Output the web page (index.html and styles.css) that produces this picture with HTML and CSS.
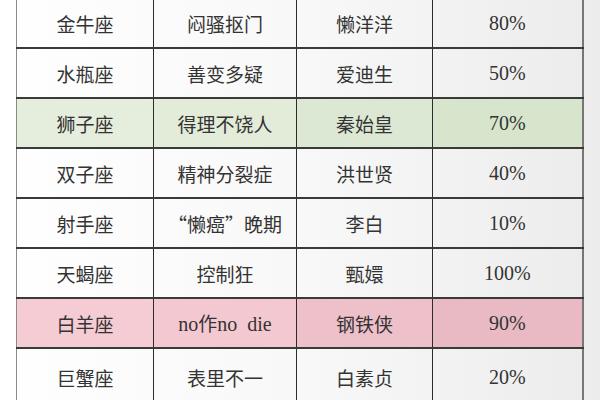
FILE: index.html
```html
<!DOCTYPE html>
<html lang="zh">
<head>
<meta charset="utf-8">
<link rel="stylesheet" href="styles.css">
</head>
<body>
<div class="page">
  <table class="zodiac">
    <colgroup>
      <col class="c1"><col class="c2"><col class="c3"><col class="c4">
    </colgroup>
    <tbody>
      <tr class="first"><td>金牛座</td><td>闷骚抠门</td><td>懒洋洋</td><td class="num">80%</td></tr>
      <tr><td>水瓶座</td><td>善变多疑</td><td>爱迪生</td><td class="num">50%</td></tr>
      <tr class="green"><td>狮子座</td><td>得理不饶人</td><td>秦始皇</td><td class="num">70%</td></tr>
      <tr><td>双子座</td><td>精神分裂症</td><td>洪世贤</td><td class="num">40%</td></tr>
      <tr><td>射手座</td><td>“懒癌”晚期</td><td>李白</td><td class="num">10%</td></tr>
      <tr><td>天蝎座</td><td>控制狂</td><td>甄嬛</td><td class="num">100%</td></tr>
      <tr class="pink"><td>白羊座</td><td><span class="lat">no</span>作<span class="lat">no&nbsp; die</span></td><td>钢铁侠</td><td class="num">90%</td></tr>
      <tr class="last"><td>巨蟹座</td><td>表里不一</td><td>白素贞</td><td class="num">20%</td></tr>
    </tbody>
  </table>
</div>
</body>
</html>
```
FILE: styles.css
```css
html, body {
  margin: 0;
  padding: 0;
}
body {
  width: 600px;
  height: 400px;
  overflow: hidden;
  background: linear-gradient(to right, #ffffff 0%, #f6f6f6 60%, #ececec 100%);
  font-family: "Noto Sans CJK SC", "Noto Sans", sans-serif;
  color: #333;
}
.page {
  padding-left: 16px;
  margin-top: -3px;
}
.zodiac {
  border-collapse: collapse;
  width: 566px;
  table-layout: fixed;
  background: linear-gradient(to right, #fefefe 0%, #f7f7f7 55%, #ececec 100%);
  border-left: 1px solid #8a8a8a;
  border-right: 2px solid #777;
}
.c1 { width: 137px; }
.c2 { width: 143px; }
.c3 { width: 136px; }
.c4 { width: 150px; }
.zodiac td {
  height: 48px;
  padding: 0;
  text-align: center;
  vertical-align: middle;
  font-size: 19px;
  border-top: 2px solid #3a3a3a;
  border-left: 1.5px solid #2c2c2c;
  line-height: 1;
}
.zodiac td:first-child {
  border-left: 1px solid #8a8a8a;
}
.zodiac td.num,
.lat {
  font-family: "Liberation Serif", serif;
  font-size: 20px;
}
.zodiac tr.first td {
  border-top: 2px solid #3a3a3a;
}
.zodiac tr.green td {
  background: linear-gradient(to right, #e5eedd 0%, #dbe8d1 60%, #d3e3c9 100%);
}
.zodiac tr.green td:nth-child(1) { background: #e5eedd; }
.zodiac tr.green td:nth-child(2) { background: #e2ecd9; }
.zodiac tr.green td:nth-child(3) { background: #dce8d3; }
.zodiac tr.green td:nth-child(4) { background: #d6e5cc; }
.zodiac tr.pink td:nth-child(1) { background: #f6ccd4; }
.zodiac tr.pink td:nth-child(2) { background: #f3c8d0; }
.zodiac tr.pink td:nth-child(3) { background: #eec1ca; }
.zodiac tr.pink td:nth-child(4) { background: #e9bac3; }
.zodiac tr.last td {
  height: 56px;
}
```
